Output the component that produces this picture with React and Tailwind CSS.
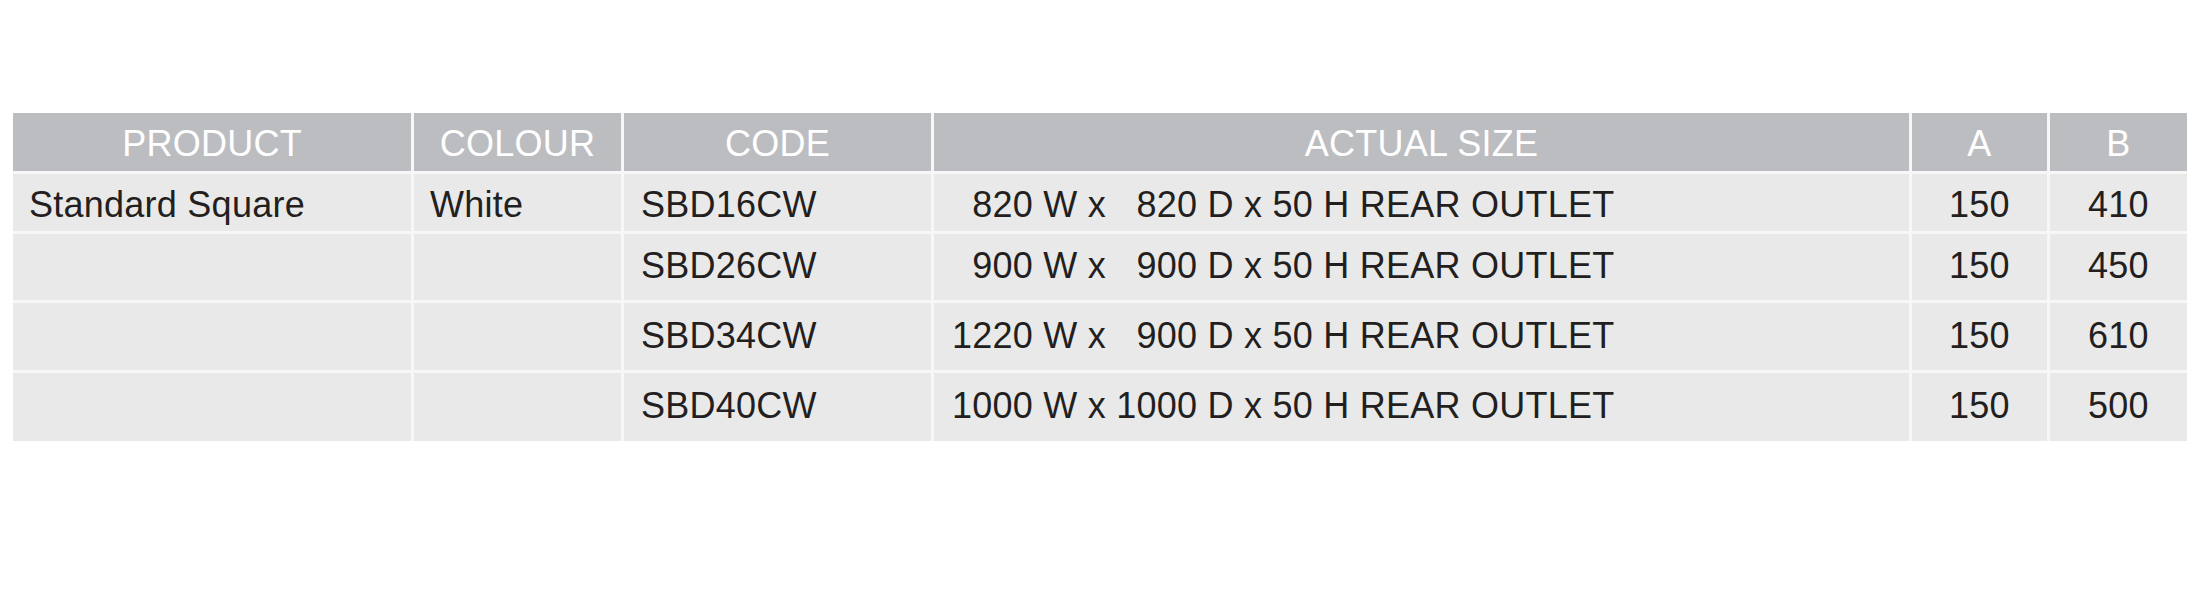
import React from 'react';

const cols = 'grid grid-cols-[398px_207px_307px_975px_135px_137px] gap-x-[3px]';

const rows = [
  { product: 'Standard Square', colour: 'White', code: 'SBD16CW', w: '820', d: '820', a: '150', b: '410', h: 'h-[57px] [&>div]:pt-[5px]' },
  { product: '', colour: '', code: 'SBD26CW', w: '900', d: '900', a: '150', b: '450', h: 'h-[66px] [&>div]:pb-[2px]' },
  { product: '', colour: '', code: 'SBD34CW', w: '1220', d: '900', a: '150', b: '610', h: 'h-[67px] [&>div]:pb-[2px]' },
  { product: '', colour: '', code: 'SBD40CW', w: '1000', d: '1000', a: '150', b: '500', h: 'h-[68px] [&>div]:pb-[2px]' },
];

const App = () => {
  return (
    <div className="h-[600px] w-full bg-white pt-[113px] pl-[13px] font-['Liberation_Sans',Arial,sans-serif] text-[36px] leading-none tracking-[0.25px]">
      <div className="flex w-[2174px] flex-col gap-y-[3px] bg-[#f7f7f7]">
        {/* Header */}
        <div className={`${cols} h-[58px] text-white`}>
          <div className="flex items-center justify-center bg-[#bcbdc0] pt-[3px]">PRODUCT</div>
          <div className="flex items-center justify-center bg-[#bcbdc0] pt-[3px]">COLOUR</div>
          <div className="flex items-center justify-center bg-[#bcbdc0] pt-[3px]">CODE</div>
          <div className="flex items-center justify-center bg-[#bcbdc0] pt-[3px]">ACTUAL SIZE</div>
          <div className="flex items-center justify-center bg-[#bcbdc0] pt-[3px]">A</div>
          <div className="flex items-center justify-center bg-[#bcbdc0] pt-[3px]">B</div>
        </div>

        {/* Rows */}
        {rows.map((row) => (
          <div key={row.code} className={`${cols} ${row.h} text-[#231f20]`}>
            <div className="flex items-center bg-[#e9e9e9] pl-[16px]">{row.product}</div>
            <div className="flex items-center bg-[#e9e9e9] pl-[16px]">{row.colour}</div>
            <div className="flex items-center bg-[#e9e9e9] pl-[17px]">{row.code}</div>
            <div className="flex items-center bg-[#e9e9e9] pl-[18px] whitespace-pre">
              <span className="inline-block w-[81px] text-right">{row.w}</span>
              <span> W x </span>
              <span className="inline-block w-[81px] text-right">{row.d}</span>
              <span> D x 50 H REAR OUTLET</span>
            </div>
            <div className="flex items-center justify-center bg-[#e9e9e9]">{row.a}</div>
            <div className="flex items-center justify-center bg-[#e9e9e9]">{row.b}</div>
          </div>
        ))}
      </div>
    </div>
  );
};

export default App;
